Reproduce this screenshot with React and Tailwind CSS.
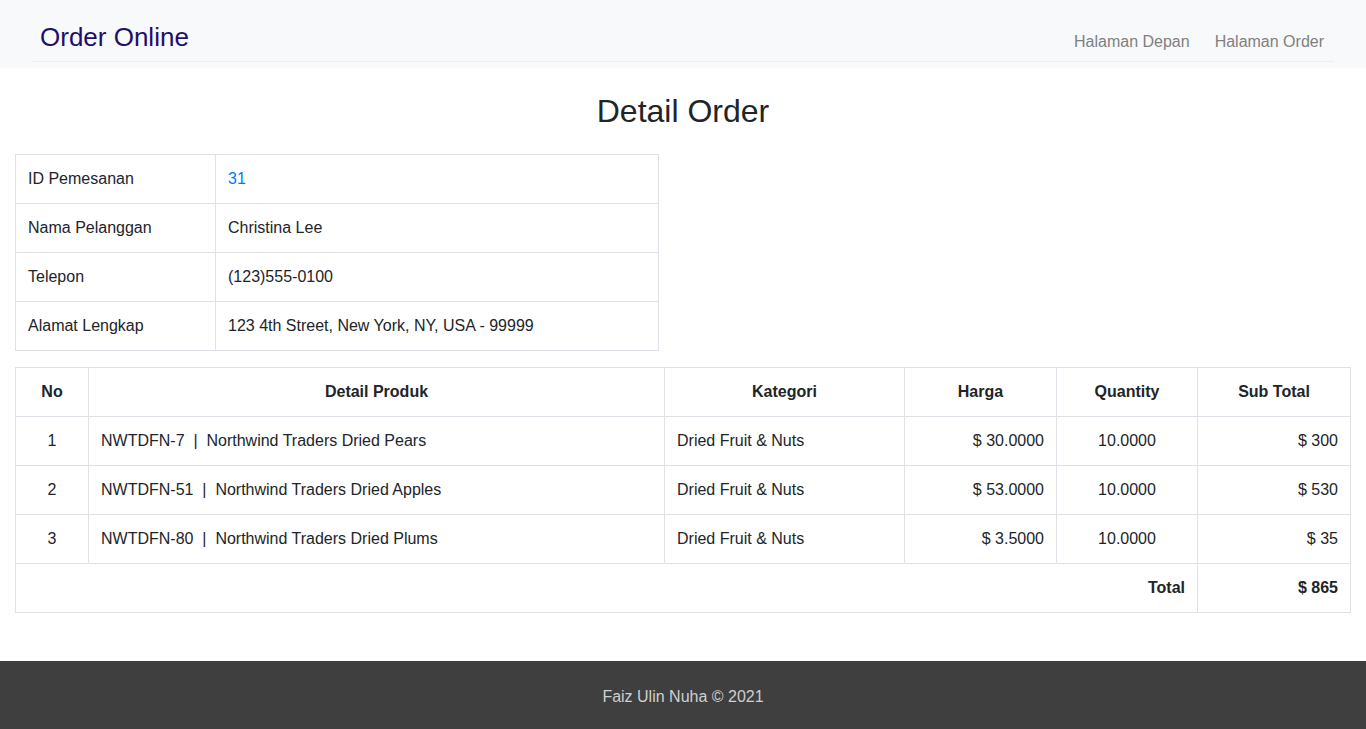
import React from "react";

const customer = [
  ["ID Pemesanan", "31", true],
  ["Nama Pelanggan", "Christina Lee"],
  ["Telepon", "(123)555-0100"],
  ["Alamat Lengkap", "123 4th Street, New York, NY, USA - 99999"],
];

const items = [
  { no: 1, kode: "NWTDFN-7", nama: "Northwind Traders Dried Pears", kategori: "Dried Fruit & Nuts", harga: "$ 30.0000", qty: "10.0000", sub: "$ 300" },
  { no: 2, kode: "NWTDFN-51", nama: "Northwind Traders Dried Apples", kategori: "Dried Fruit & Nuts", harga: "$ 53.0000", qty: "10.0000", sub: "$ 530" },
  { no: 3, kode: "NWTDFN-80", nama: "Northwind Traders Dried Plums", kategori: "Dried Fruit & Nuts", harga: "$ 3.5000", qty: "10.0000", sub: "$ 35" },
];

const cell = "border border-[#dee2e6] px-3 py-3 leading-6";

export default function App() {
  return (
    <div className="min-h-screen bg-white text-[#212529] text-base" style={{ fontFamily: '"Liberation Sans", Arial, sans-serif' }}>
      {/* Navbar */}
      <nav className="bg-[#f8f9fa] h-[68px]">
        <div className="mx-8 border-b border-[#eceef0] flex items-end justify-between px-2 pt-[22px] pb-2">
          <span className="text-[26px] leading-[31px] text-[#1f0f6b]">Order Online</span>
          <div className="flex gap-[25px] pr-[2px] -mb-px text-[#808080] leading-6">
            <span>Halaman Depan</span>
            <span>Halaman Order</span>
          </div>
        </div>
      </nav>

      {/* Content */}
      <main className="px-[15px] pt-6 pb-8">
        <h2 className="text-[32px] leading-[38px] text-center mb-6">Detail Order</h2>

        <table className="w-[644px] border-collapse mb-4">
          <tbody>
            {customer.map(([label, value, link]) => (
              <tr key={label}>
                <td className={`${cell} w-[200px]`}>{label}</td>
                <td className={`${cell} ${link ? "text-[#007bff]" : ""}`}>{value}</td>
              </tr>
            ))}
          </tbody>
        </table>

        <table className="w-full border-collapse mb-4">
          <thead>
            <tr className="font-bold">
              <th className={`${cell} w-[73px]`}>No</th>
              <th className={`${cell} w-[576px]`}>Detail Produk</th>
              <th className={`${cell} w-[240px]`}>Kategori</th>
              <th className={`${cell} w-[152px]`}>Harga</th>
              <th className={`${cell} w-[141px]`}>Quantity</th>
              <th className={cell}>Sub Total</th>
            </tr>
          </thead>
          <tbody>
            {items.map((it) => (
              <tr key={it.no}>
                <td className={`${cell} text-center`}>{it.no}</td>
                <td className={cell}>
                  {it.kode}&nbsp; | &nbsp;{it.nama}
                </td>
                <td className={cell}>{it.kategori}</td>
                <td className={`${cell} text-right`}>{it.harga}</td>
                <td className={`${cell} text-center`}>{it.qty}</td>
                <td className={`${cell} text-right`}>{it.sub}</td>
              </tr>
            ))}
            <tr className="font-bold">
              <td colSpan={5} className={`${cell} text-right`}>Total</td>
              <td className={`${cell} text-right`}>$ 865</td>
            </tr>
          </tbody>
        </table>
      </main>

      {/* Footer */}
      <footer className="bg-[#3f3f3f] h-[68px] pt-1 flex items-center justify-center text-[#cfcfcf]">
        Faiz Ulin Nuha © 2021
      </footer>
    </div>
  );
}
